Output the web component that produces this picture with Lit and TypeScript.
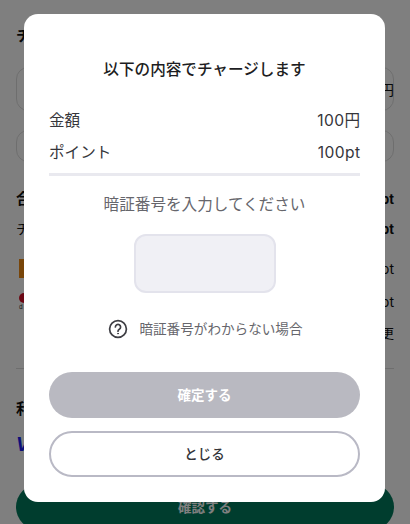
import { LitElement, html, css } from "lit";
import { customElement } from "lit/decorators.js";

@customElement("app-root")
export class AppRoot extends LitElement {
  static styles = css`
    :host {
      display: block;
      position: relative;
      width: 410px;
      height: 524px;
      overflow: hidden;
      background: #fff;
      font-family: "Inter", "Noto Sans CJK JP", sans-serif;
      color: #26262b;
    }
    .page {
      display: flex;
      flex-direction: column;
      padding: 26px 16px 0;
      box-sizing: border-box;
      height: 524px;
      font-size: 14px;
      color: #111;
    }
    .h { font-weight: 700; font-size: 15px; line-height: 20px; }
    .box { border: 1px solid #ddd; border-radius: 12px; box-sizing: border-box; }
    .b1 { height: 44px; margin-top: 21px; display: flex; align-items: center; justify-content: flex-end; }
    .out { margin-right: -1px; }
    .b2 { height: 32px; margin-top: 19px; }
    .row { display: flex; justify-content: space-between; align-items: center; line-height: 20px; }
    .sum { margin-top: 27px; }
    .charge { margin-top: 10px; }
    .pay1 { margin-top: 19px; height: 21px; }
    .pay2 { margin-top: 12px; height: 21px; }
    .chg { margin-top: 11px; justify-content: flex-end; font-size: 13px; }
    .orange { width: 5px; height: 19px; background: #f08a12; display: block; margin-left: 3px; }
    .brand { display: flex; flex-direction: column; align-items: flex-start; margin-left: 3px; }
    .red { width: 10px; height: 10px; border-radius: 50%; background: #d60f26; display: block; }
    .d { font-size: 6px; line-height: 7px; color: #333; }
    .pt { font-weight: 700; font-size: 13px; }
    .hr { height: 1px; background: #ddd; margin-top: 25px; }
    .use { margin-top: 30px; }
    .visa { margin-top: 15px; font: italic 700 20px/20px "Liberation Sans", sans-serif; color: #1a1ff0; }
    .go {
      margin-top: auto;
      margin-bottom: -6px;
      height: 46px;
      padding-bottom: 2px;
      box-sizing: border-box;
      border-radius: 23px;
      background: #007a5c;
      color: #fff;
      display: flex;
      align-items: center;
      justify-content: center;
      font-weight: 700;
      font-size: 13.5px;
    }
    .overlay {
      position: absolute;
      inset: 0;
      background: rgba(0, 0, 0, 0.5);
    }
    .modal {
      position: absolute;
      left: 24px;
      top: 14px;
      width: 361px;
      height: 488px;
      box-sizing: border-box;
      background: #fff;
      border-radius: 14px;
      padding: 45px 25px 0;
      display: flex;
      flex-direction: column;
    }
    .title {
      text-align: center;
      font-size: 15.6px;
      font-weight: 500;
      line-height: 22px;
      color: #1d1d22;
    }
    .line {
      display: flex;
      justify-content: space-between;
      font-size: 15.6px;
      line-height: 22px;
      color: #35353a;
    }
    .value { letter-spacing: 0.4px; margin-right: -0.4px; }
    .amount { margin-top: 29px; }
    .points { margin-top: 10px; }
    .rule { height: 3px; background: #e9e9ef; margin-top: 9px; }
    .prompt {
      margin-top: 18px;
      text-align: center;
      font-size: 15.6px;
      line-height: 22px;
      color: #66666c;
    }
    .pin {
      align-self: center;
      width: 142px;
      height: 59px;
      margin-top: 18px;
      box-sizing: border-box;
      background: #f0f0f5;
      border: 2px solid #e3e3ec;
      border-radius: 12px;
    }
    .help {
      display: flex;
      justify-content: center;
      align-items: center;
      gap: 11px;
      margin-top: 26px;
      padding-left: 2px;
      font-size: 13.6px;
      line-height: 20px;
      color: #66666c;
    }
    .help svg { display: block; }
    .btn {
      height: 46px;
      box-sizing: border-box;
      border-radius: 23px;
      display: flex;
      align-items: center;
      justify-content: center;
      font-size: 13.5px;
      padding-bottom: 2px;
    }
    .ok { margin-top: 33px; background: #b9b9c1; color: #fff; font-weight: 700; }
    .close {
      margin-top: 13px;
      background: #fff;
      border: 2px solid #b9b9c5;
      color: #35353a;
      font-weight: 500;
    }
  `;

  render() {
    return html`
      <div class="page">
        <div class="h">チャージ金額</div>
        <div class="box b1"><span class="out">円</span></div>
        <div class="box b2"></div>
        <div class="row h sum"><span>合計</span><span class="pt">100pt</span></div>
        <div class="row charge"><span>チャージ</span><span class="pt">100pt</span></div>
        <div class="row pay1"><i class="orange"></i><span>0pt</span></div>
        <div class="row pay2"><span class="brand"><i class="red"></i><span class="d">d</span></span><span>0pt</span></div>
        <div class="row chg"><span>変更</span></div>
        <div class="hr"></div>
        <div class="h use">利用方法</div>
        <div class="visa">V</div>
        <div class="go">確認する</div>
      </div>
      <div class="overlay"></div>
      <div class="modal">
        <div class="title">以下の内容でチャージします</div>
        <div class="line amount"><span>金額</span><span class="value">100円</span></div>
        <div class="line points"><span>ポイント</span><span class="value">100pt</span></div>
        <div class="rule"></div>
        <div class="prompt">暗証番号を入力してください</div>
        <div class="pin"></div>
        <div class="help">
          <svg width="20" height="20" viewBox="0 0 20 20" fill="none" stroke="#3e3e44" stroke-width="1.7" stroke-linecap="round">
            <circle cx="10" cy="10" r="8.4"></circle>
            <path d="M7.4 8a2.6 2.6 0 1 1 3.9 2.3c-.9.5-1.3 1-1.3 1.9"></path>
            <circle cx="10" cy="14.6" r="0.5" fill="#3e3e44" stroke-width="0.8"></circle>
          </svg>
          <span>暗証番号がわからない場合</span>
        </div>
        <div class="btn ok">確定する</div>
        <div class="btn close">とじる</div>
      </div>
    `;
  }
}
